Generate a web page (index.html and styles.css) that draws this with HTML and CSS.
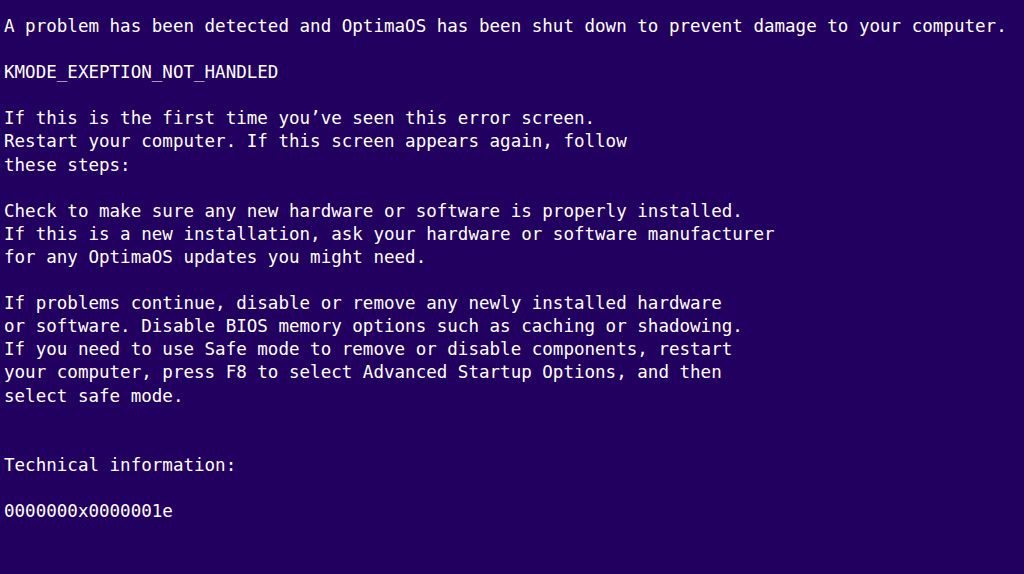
FILE: index.html
```html
<!DOCTYPE html>
<html lang="en">
<head>
  <meta charset="UTF-8" />
  <title>OptimaOS - Stop Error</title>
  <link rel="stylesheet" href="styles.css">
</head>
<body>

  <main class="bsod">
    <p>A problem has been detected and OptimaOS has been shut down to prevent damage to your computer.</p>

    <p>KMODE_EXEPTION_NOT_HANDLED</p>

    <p>If this is the first time you’ve seen this error screen.<br>
    Restart your computer. If this screen appears again, follow<br>
    these steps:</p>

    <p>Check to make sure any new hardware or software is properly installed.<br>
    If this is a new installation, ask your hardware or software manufacturer<br>
    for any OptimaOS updates you might need.</p>

    <p>If problems continue, disable or remove any newly installed hardware<br>
    or software. Disable BIOS memory options such as caching or shadowing.<br>
    If you need to use Safe mode to remove or disable components, restart<br>
    your computer, press F8 to select Advanced Startup Options, and then<br>
    select safe mode.</p>

    <p class="tech">Technical information:</p>

    <p>0000000x0000001e</p>
  </main>

</body>
</html>
```

FILE: styles.css
```css
html, body {
  margin: 0;
  padding: 0;
  height: 100%;
}

body {
  background-color: #22005f;
  color: #ffffff;
  font-family: 'DejaVu Sans Mono', 'Liberation Mono', monospace;
  font-size: 17.55px;
  line-height: 23.1px;
}

.bsod {
  padding: 15px 4px 0;
}

.bsod p {
  margin: 0 0 23.1px;
  white-space: nowrap;
}

.bsod .tech {
  margin-top: 46.2px;
}
```
